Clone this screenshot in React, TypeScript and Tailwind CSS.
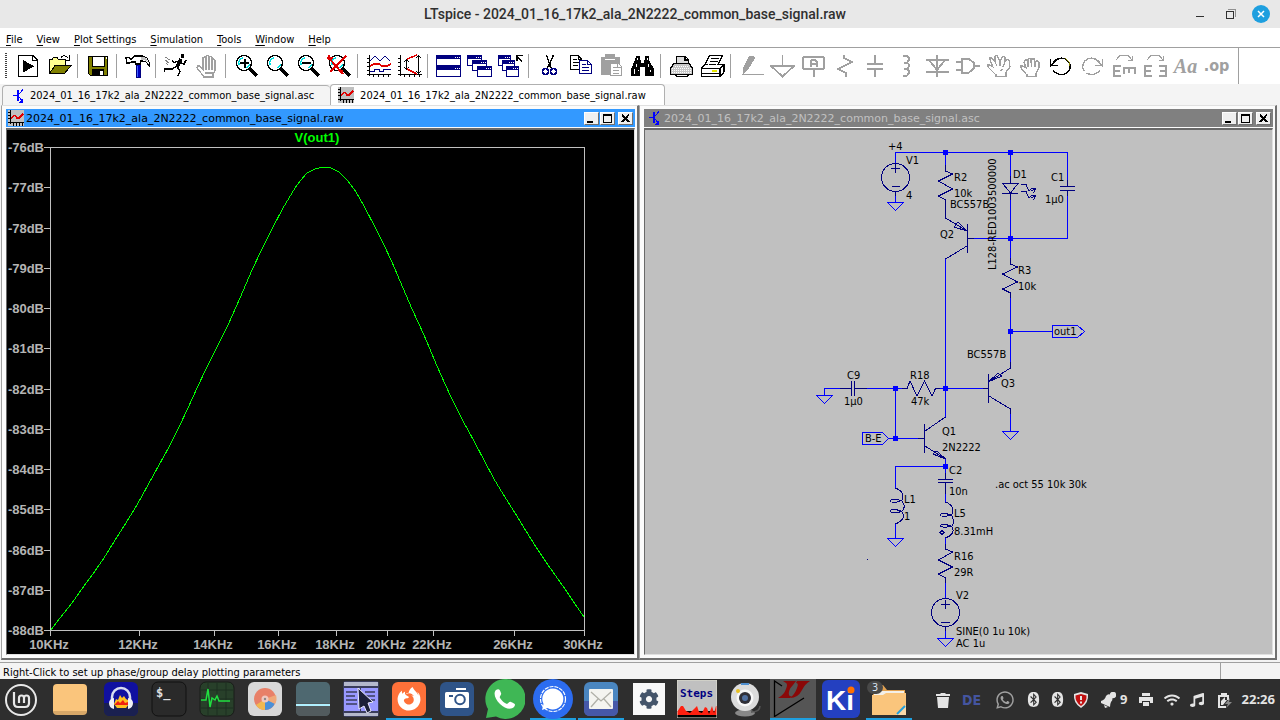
import React from 'react';
import { FaWhatsapp, FaBluetooth, FaFirefoxBrowser, FaWifi, FaMusic, FaCog } from 'react-icons/fa';

const FILE = '2024_01_16_17k2_ala_2N2222_common_base_signal';

// --- TOOLBAR ICONS (25x24, hard pixel edges) ---
const Tool: React.FC<{ children: React.ReactNode; color?: string }> = ({ children, color = '#000' }) => (
  <svg className="h-6 w-[25px]" viewBox="0 0 25 24" fill="none" stroke={color} strokeWidth="1.4" shapeRendering="crispEdges">
    {children}
  </svg>
);

const GRAY = '#a0a0a0';
const NAVY = '#000080';

const RunIcon = () => (
  <Tool>
    <path d="M2.5 1.5H17l4.500 4.500V22.500H2.500Z" />
    <path d="M16.500 1.500V6.500H21.500" />
    <path d="M7 6V18.500L18 12.300Z" fill="#000" stroke="none" />
  </Tool>
);

const OpenIcon = () => (
  <Tool>
    <path d="M2.500 19V5.500H5L6.500 3.500H10L11.500 5.500H18.500V11" fill="#ffff90" strokeWidth="1" />
    <path d="M2.500 19.500L8 11.500H24L17.500 19.500Z" fill="#808000" strokeWidth="1" />
    <path d="M14 3.500C16 1 19 1 21.500 4.500M22.500 1V6H17.500" strokeWidth="1" />
  </Tool>
);

const SaveIcon = () => (
  <Tool>
    <path d="M2.500 2.500H21.500V21.500H4.500L2.500 19.500Z" fill="#808000" />
    <path d="M6 2.500H18V12H6Z" fill="#fff" strokeWidth="1" />
    <path d="M6 15H18V22H6Z" fill="#000" stroke="none" />
    <path d="M14 17H17V21H14Z" fill="#fff" stroke="none" />
    <path d="M20 4H21" stroke="#fff" />
  </Tool>
);

const HammerIcon = () => (
  <Tool>
    <path d="M11 10H15V23H11Z" fill="#0000c0" stroke="#000080" strokeWidth="1" />
    <path d="M1 3.500H4L5 5H7L9 2H18L22 4L24.500 9V12L21 8L18 7H15.500V10H10.500V8H6L5 9H1.500Z" fill="#fff" strokeWidth="1.200" />
    <path d="M16 3H19L22 5L23 8L19 6H16Z" fill="#c0c0c0" stroke="none" />
    <path d="M12 12V23" stroke="#4060ff" strokeWidth="1" />
  </Tool>
);

const RunnerIcon = () => (
  <Tool>
    <path d="M17 0H20V4H17Z" fill="#000" stroke="none" />
    <path d="M17 5L13 13" strokeWidth="3.500" />
    <path d="M15 7L10 8.500L8 6M17 9L20 10L22 6M13 12L8 15H1L0.500 18M13 13L16 17L14 22" strokeWidth="1.400" />
    <path d="M1 3L6 6M1 6L5 9M2 9L4 11" stroke="#808080" strokeWidth="1" />
  </Tool>
);

const HaltIcon = () => (
  <Tool color={GRAY}>
    <path d="M8 21.500L2 14L3 12H5L8 15V4L9.500 3L11 4V11V2.500L12.500 1.500L14 2.500V11V3.500L15.500 2.500L17 3.500V11V6L18.500 5L20 6V17L18 20V23H9Z" />
    <path d="M11 11V16M14 11V16M17 11V16M10 19H18" />
  </Tool>
);

const Lens: React.FC<{ children?: React.ReactNode }> = ({ children }) => (
  <Tool>
    <circle cx="10" cy="9" r="7.500" strokeWidth="1.400" fill="#fff" />
    <path d="M5 11C4 7 6 4 9 4M13 14L16 10" stroke="#00e0e0" strokeWidth="1.400" />
    <path d="M16 15L23 22" strokeWidth="3.200" />
    {children}
  </Tool>
);

const PlotIcon: React.FC<{ children: React.ReactNode }> = ({ children }) => (
  <Tool>
    <path d="M3.500 1V21.500M1 20.500H25M1 4.500H3M1 8.500H3M1 12.500H3M1 16.500H3M7.500 21V23M12.500 21V23M17.500 21V23M22.500 21V23" strokeWidth="1" />
    {children}
  </Tool>
);

const Win: React.FC<{ x: number; y: number; w: number; h: number }> = ({ x, y, w, h }) => (
  <g stroke="none">
    <path d={`M${x} ${y}h${w}v${h}h${-w}z`} fill={NAVY} />
    <path d={`M${x + 1} ${y + 4}h${w - 2}v${h - 5}h${-(w - 2)}z`} fill="#fff" />
    <path d={`M${x + w - 6} ${y + 1.5}h1v1h-1zm2 0h1v1h-1zm2 0h1v1h-1z`} fill="#fff" />
  </g>
);

const CutIcon = () => (
  <Tool>
    <path d="M9.500 1L14 14M16.500 1L10.500 14M13 9V13" strokeWidth="1.400" />
    <circle cx="8.500" cy="17.500" r="2.800" stroke={NAVY} strokeWidth="1.500" />
    <circle cx="16.500" cy="17.500" r="2.800" stroke={NAVY} strokeWidth="1.500" />
  </Tool>
);

const CopyIcon = () => (
  <Tool>
    <path d="M2.500 1.500H10L13.500 5V15.500H2.500Z" fill="#fff" strokeWidth="1" />
    <path d="M5 5.500H9M5 8.500H11M5 11.500H10M10 1.500V5H13" strokeWidth="1" />
    <path d="M11.500 6.500H19.500L23.500 10.500V19.500H11.500Z" fill="#fff" stroke={NAVY} strokeWidth="1" />
    <path d="M14 10.500H18M14 13.500H21M14 16.500H21M19.500 6.500V10.500H23" stroke={NAVY} strokeWidth="1" />
  </Tool>
);

const PasteIcon = () => (
  <Tool color={GRAY}>
    <path d="M2 3H20V10H11V20H2Z" fill={GRAY} strokeWidth="1" />
    <path d="M7 1H15V5H7Z" fill={GRAY} />
    <path d="M6 5.500H16" stroke="#fff" strokeWidth="1" />
    <path d="M11.500 9.500H19.500L22.500 12.500V21.500H11.500Z" fill="#fff" />
    <path d="M14 13.500H18M14 16.500H20M14 19H20M18.500 9.500V13H22" strokeWidth="1" />
  </Tool>
);

const FindIcon = () => (
  <Tool>
    <path d="M6 2H10V6H11V9H14V6H15V2H19V6L24 15V22H15V13H10V22H1V15L5 6Z" fill="#000" stroke="none" />
    <path d="M7 4V6M17 4V6M6 10V13M4 15V20M18 10V13M20 16V18M8 16V17" stroke="#fff" strokeWidth="1" />
  </Tool>
);

const PrintSetupIcon = () => (
  <Tool>
    <path d="M7.500 9V2.500H16L19.500 6V9.500" fill="#ddd" />
    <path d="M5 9.500H20L23.500 14V20.500H1.500V14Z" fill="#c8c8c8" />
    <path d="M6 20.500H20L18.500 22.500H7.500ZM16 2.500V6H19" fill="#fff" />
    <path d="M3 14H22M3 16H22M3 18H22M6 12H20" stroke="#fff" strokeWidth="1" strokeDasharray="1 1" />
  </Tool>
);

const PrintIcon = () => (
  <Tool>
    <path d="M5 11L9.500 1.500H22.500L18 11" fill="#fff" />
    <path d="M11 4.500H19M10 7.500H18M9 10H16" strokeWidth="1" />
    <path d="M1.500 14.500L5 10.500H8M19 10.500H24V18L20 22.500H1.500V14.500H20V22M20 14.500L24 10.500" fill="#fff" />
    <path d="M2 19.500H20" strokeWidth="1" />
    <path d="M12 17H17" stroke="#e8e800" strokeWidth="2" />
  </Tool>
);

const PencilIcon = () => (
  <Tool color={GRAY}>
    <path d="M10 1.500H14L16 4L9 16L4 20V14Z" fill={GRAY} stroke="none" />
    <path d="M3 20.500H25" strokeWidth="1" />
  </Tool>
);

const GroundIcon = () => (
  <Tool color={GRAY}>
    <path d="M12.500 1V12M1 12H24L12.500 22.500Z" strokeWidth="1.800" />
  </Tool>
);

const LabelIcon = () => (
  <Tool color={GRAY}>
    <rect x="2" y="3" width="21" height="12" rx="2" strokeWidth="2" />
    <path d="M12.500 16V23M9.500 13V7.500L11 5.500H14L15.500 7.500V13M9.500 10H15.500" strokeWidth="2" />
  </Tool>
);

const ResistorIcon = () => (
  <Tool color={GRAY}>
    <path d="M12 1V4L20 8L6 15L14 19V23" strokeWidth="2" />
  </Tool>
);

const CapacitorIcon = () => (
  <Tool color={GRAY}>
    <path d="M12 1V9M12 16V23M4 10H20M4 15H20" strokeWidth="2" />
  </Tool>
);

const InductorIcon = () => (
  <Tool color={GRAY}>
    <path d="M9 2H13L15 4V6L13 8.500H10H13L15 10.500V12.500L13 15H10H13L15 17V19L13 21.500H9" strokeWidth="2" />
  </Tool>
);

const DiodeIcon = () => (
  <Tool color={GRAY}>
    <path d="M12 1V23M1 6H24M4 6L12 16L20 6M1 18H24" strokeWidth="2" />
  </Tool>
);

const GateIcon = () => (
  <Tool color={GRAY}>
    <path d="M6 5H13L18 9V14L13 18.500H6ZM0 8H6M0 15.500H6M18 12H24" strokeWidth="2" />
  </Tool>
);

const MoveIcon = () => (
  <Tool color={GRAY}>
    <path d="M8 20L1 13V11H3L6 13L3 6V4H5L8 8V2L10 1L13 8L16 2L18 3V8L20 5L22 6L23 13L19 18V22.500H9V20M8 8L10 12M13 8V12M18 8L16 13M16 15L13 17" strokeWidth="1.300" />
  </Tool>
);

const DragIcon = () => (
  <Tool color={GRAY}>
    <path d="M8 20L3 14V12H5L8 14L6 8L7 6H9L10 9V5L12 4L13 5V9L14 5H16L17 9L18 7H20L21 8V14L18 19V22.500H9V20M10 9V13M13.500 9V13M17 9V13" strokeWidth="1.300" />
  </Tool>
);

const UndoIcon: React.FC<{ color?: string; flip?: boolean }> = ({ color = '#000', flip }) => (
  <Tool color={color}>
    <g transform={flip ? 'matrix(-1 0 0 1 24 0)' : undefined}>
      <path d="M3 11C6 4 14 2 19 7C24 13 20 20 13 20.500C9 20.500 6 19 4 16" strokeWidth="1.400" strokeDasharray={flip ? '30 3' : undefined} />
      {!flip && <path d="M16 4.500C19 6 21 9 21 12" stroke="#808000" strokeWidth="1" />}
      <path d="M1.500 5V12.500M1.500 11.500H9M2 11L8 6" strokeWidth="1.600" />
    </g>
  </Tool>
);

const FlipIcon: React.FC<{ rotate?: boolean }> = ({ rotate }) => (
  <Tool color={GRAY}>
    <path d="M5 6L9 1.500H17L21 6M21.500 2V6.500H17" strokeWidth="1.200" />
    <path d="M10 12H3V22H10M3 17H9" strokeWidth="2.600" />
    {rotate ? (
      <path d="M12 14H25M13 14V20M18 14V19M24 14V20" strokeWidth="2.400" />
    ) : (
      <path d="M17 12H24V22H17M18 17H23" strokeWidth="2.600" />
    )}
  </Tool>
);

const TextGlyph: React.FC<{ children: string; className: string }> = ({ children, className }) => (
  <span className={`text-[#a0a0a0] font-bold leading-6 ${className}`}>{children}</span>
);

type ToolDef = [string, React.ReactNode] | null;

const TOOLS: ToolDef[] = [
  ['Run', <RunIcon />],
  ['Open', <OpenIcon />],
  null,
  ['Save', <SaveIcon />],
  null,
  ['Control Panel', <HammerIcon />],
  null,
  ['Simulate', <RunnerIcon />],
  ['Halt', <HaltIcon />],
  null,
  ['Zoom in', <Lens><path d="M6 9H15M10.500 4.500V13.500" strokeWidth="2" /></Lens>],
  ['Pan', <Lens />],
  ['Zoom out', <Lens><path d="M6 9H15" strokeWidth="2" /></Lens>],
  ['Zoom to fit', <Lens><path d="M1 3L16 20M19 2L3 18M2 1V6M0 4H6M16 17L11 16" stroke="#e00000" strokeWidth="2" /></Lens>],
  null,
  ['Autorange', (
    <PlotIcon>
      <path d="M4 7L9 2L14 7L19 2L24 7" stroke={NAVY} strokeWidth="1" />
      <path d="M4 12L8 10H13L16 12H21L25 10" stroke="#e00000" strokeWidth="1.500" />
      <path d="M4 17.500H8V15.500H13V17.500H17V15.500H25" stroke={NAVY} strokeWidth="1" />
    </PlotIcon>
  )],
  ['Axes', (
    <PlotIcon>
      <path d="M9.500 6V15M21.500 2V19M7 8L9.500 6L12 8M7 13L9.500 15L12 13M19 4L21.500 2L24 4M19 17L21.500 19L24 17" strokeWidth="1" />
      <path d="M10 5L20 1M10 15L20 20" stroke="#e00000" strokeWidth="1.400" />
    </PlotIcon>
  )],
  null,
  ['Tile', <Tool><Win x={0} y={1} w={25} h={11} /><Win x={0} y={12} w={25} h={11} /></Tool>],
  ['Cascade', <Tool><Win x={0} y={1} w={15} h={11} /><Win x={5} y={6} w={15} h={11} /><Win x={10} y={12} w={15} h={11} /></Tool>],
  ['Close all', <Tool><Win x={0} y={1} w={13} h={11} /><Win x={4} y={6} w={13} h={11} /><Win x={8} y={12} w={13} h={11} /><path d="M19 7V1.500H25M19 2L24 8" /></Tool>],
  null,
  ['Cut', <CutIcon />],
  ['Copy', <CopyIcon />],
  ['Paste', <PasteIcon />],
  ['Find', <FindIcon />],
  null,
  ['Print Setup', <PrintSetupIcon />],
  ['Print', <PrintIcon />],
  null,
  ['Wire', <PencilIcon />],
  ['Ground', <GroundIcon />],
  ['Label Net', <LabelIcon />],
  ['Resistor', <ResistorIcon />],
  ['Capacitor', <CapacitorIcon />],
  ['Inductor', <InductorIcon />],
  ['Diode', <DiodeIcon />],
  ['Component', <GateIcon />],
  ['Move', <MoveIcon />],
  ['Drag', <DragIcon />],
  ['Undo', <UndoIcon />],
  ['Redo', <UndoIcon color={GRAY} flip />],
  ['Rotate', <FlipIcon rotate />],
  ['Mirror', <FlipIcon />],
  ['Text', <TextGlyph className="font-['Liberation_Serif',serif] text-xl italic">Aa</TextGlyph>],
  ['SPICE Directive', <TextGlyph className="font-['DejaVu_Sans_Condensed',sans-serif] text-base leading-5">.op</TextGlyph>],
];

const MENUS = ['File', 'View', 'Plot Settings', 'Simulation', 'Tools', 'Window', 'Help'];

// --- DOCUMENT ICONS ---
const SchematicIcon = () => (
  <svg className="h-4 w-4 shrink-0" viewBox="0 0 16 16" fill="none" stroke="#0000ff" shapeRendering="crispEdges">
    <path d="M3 7.500H7" />
    <path d="M8 2V13" strokeWidth="2" />
    <path d="M9 6L13 1.500M9 9L13 14" />
    <path d="M12.500 11V14.500H9.500Z" fill="#0000ff" stroke="none" />
  </svg>
);

const WaveIcon = () => (
  <svg className="h-4 w-4 shrink-0" viewBox="0 0 16 16" fill="none" stroke="#000" shapeRendering="crispEdges">
    <path d="M0 0H16V16H0Z" fill="#c0c0c0" stroke="none" />
    <path d="M2.500 0V14M0 12.500H16M0 2.500H2M0 5.500H2M0 8.500H2M5.500 13V16M8.500 13V16M11.500 13V16M14.500 13V16" />
    <path d="M3 8L6 5.500H7L9 8H11L15 4" stroke="#e00000" strokeWidth="1.600" />
  </svg>
);

const WinButton: React.FC<{ label: string; children: React.ReactNode }> = ({ label, children }) => (
  <button aria-label={label} className="flex h-[13px] w-[15px] items-center justify-center border border-t-white border-l-white border-r-[#707070] border-b-[#707070] bg-[#f0f0f0]">
    <svg className="h-[11px] w-[13px]" viewBox="0 0 13 11" fill="none" stroke="#000" shapeRendering="crispEdges">
      {children}
    </svg>
  </button>
);

const Pane: React.FC<{ title: string; icon: React.ReactNode; active?: boolean; children: React.ReactNode }> = ({ title, icon, active, children }) => (
  <section className="flex min-w-0 flex-1 flex-col border-l border-t border-r-2 border-b-2 border-t-[#e0e0e0] border-l-[#a0a0a0] border-r-[#707070] border-b-[#707070] bg-[#fbfbfb] pt-[3px] pr-[2px] pb-[3px] pl-1">
    <header className={`flex h-[18px] shrink-0 items-center font-['DejaVu_Sans',sans-serif] text-[11px] ${active ? 'bg-[#3399ff] text-black' : 'bg-[#808080] text-[#c0c0c0]'}`}>
      <span className="mr-[2px] ml-[2px]">{icon}</span>
      <h2 className="flex-1 truncate pt-[2px]">{title}</h2>
      <div className="flex gap-px pr-[2px]">
        <WinButton label="Minimize"><path d="M2 9H8" strokeWidth="2" /></WinButton>
        <WinButton label="Maximize"><path d="M2.500 1V9.500H10.500V1M2 1.500H11M2 2.500H11" /></WinButton>
        <span className="w-px" />
        <WinButton label="Close"><path d="M3 1.500L10 9M10 1.500L3 9" strokeWidth="2" /></WinButton>
      </div>
    </header>
    <div className="mt-px min-h-0 flex-1 border border-t-2 border-t-[#696969] border-l-[#696969] border-r-[#e0e0e0] border-b-[#e0e0e0]">
      {children}
    </div>
  </section>
);

// --- PLOT ---
const LEFT = 50;
const RIGHT = 584;
const TOP = 147;
const BOTTOM = 630;

const CURVE: [number, number][] = [
  [51, 630], [60, 618], [72, 603], [84, 586], [95, 571], [104, 558], [112, 545], [124, 526], [137, 505],
  [148, 485], [159, 465], [169, 447], [179, 427], [188, 408], [197, 388], [206, 369], [219, 343], [228, 325],
  [240, 298], [252, 270], [262, 249], [272, 229], [283, 208], [295, 188], [301, 180], [307, 173], [315, 169], [323, 167],
  [331, 168], [339, 172], [348, 181], [356, 192], [364, 206], [375, 227], [384, 245], [392, 262], [400, 281],
  [412, 309], [424, 335], [437, 366], [450, 395], [463, 421], [474, 441], [485, 462], [494, 479], [503, 494],
  [515, 513], [526, 531], [536, 547], [548, 565], [565, 589], [575, 604], [584, 617],
];

const freqX = (khz: number) => Math.round(LEFT + (Math.log(khz / 10) / Math.log(3)) * (RIGHT - LEFT));

const Plot = () => (
  <svg className="block h-full w-full bg-black font-['Liberation_Sans',sans-serif] text-[13px] font-bold" viewBox="7 130 627 524" fill="none">
    <g stroke="#c0c0c0" shapeRendering="crispEdges">
      <path d={`M${LEFT + 0.5} ${TOP + 0.5}H${RIGHT + 0.5}V${BOTTOM + 0.5}H${LEFT + 0.5}Z`} />
      {Array.from({ length: 13 }, (_, i) => (
        <path key={i} d={`M44 ${Math.round(TOP + i * 40.25) + 0.5}H${LEFT}`} />
      ))}
      {[10, 12, 14, 16, 18, 20, 22, 26, 30].map((f) => (
        <path key={f} d={`M${freqX(f) + 0.5} ${BOTTOM}V${BOTTOM + 6}`} />
      ))}
    </g>
    <g fill="#b4b4b4">
      {Array.from({ length: 13 }, (_, i) => (
        <text key={i} x="44" y={Math.round(TOP + i * 40.25) + 5} textAnchor="end">{`-${76 + i}dB`}</text>
      ))}
      {[10, 12, 14, 16, 18, 20, 22, 26, 30].map((f) => (
        <text key={f} x={freqX(f) - 1} y="649" textAnchor="middle">{`${f}KHz`}</text>
      ))}
    </g>
    <text x="317" y="142" textAnchor="middle" fill="#00ff00">V(out1)</text>
    <polyline points={CURVE.map((p) => p.join(',')).join(' ')} stroke="#00ff00" shapeRendering="crispEdges" />
  </svg>
);

// --- SCHEMATIC ---
const WIRES = [
  'M895.500 163V152.500H1067.500V180', 'M895.500 196V202', 'M1067.500 196V238.500H974', 'M945.500 152V165', 'M1010.500 152V176',
  'M1010.500 200V258', 'M945.500 259V417', 'M1010.500 298V362', 'M1010.500 331.500H1052', 'M824.500 395V388.500H840',
  'M867 388.500H902', 'M895.500 388V438', 'M889 438.500H918', 'M940 388.500H983', 'M1010.500 414V431', 'M945.500 459V473',
  'M945.500 466.500H895.500V488', 'M895.500 524V538', 'M945.500 494V502', 'M945.500 538V544', 'M945.500 583V598', 'M945.500 631V638',
  'M887.500 202.500H903.500L895.500 210.500Z', 'M816.500 395.500H832.500L824.500 403.500Z', 'M1002.500 431.500H1018.500L1010.500 439.500Z',
  'M887.500 538.500H903.500L895.500 546.500Z', 'M937.500 638.500H953.500L945.500 646.500Z',
  'M1052.500 325.500H1077.500L1084.500 331.500L1077.500 337.500H1052.500Z', 'M862.500 432.500H882.500L888.500 438.500L882.500 444.500H862.500Z',
];

const PARTS = [
  // V1, V2
  'M909.500 177.500A14 14 0 1 1 881.500 177.500A14 14 0 1 1 909.500 177.500M891 168.500H900M895.500 164V173M892 186.500H900M895.500 191V196',
  'M959.500 612.500A14 14 0 1 1 931.500 612.500A14 14 0 1 1 959.500 612.500M941 604.500H950M945.500 600V609M941 622.500H950M945.500 626V631',
  // R2, R3, R16, R18
  'M945.500 165V171L952.500 174L938.500 181L952.500 189L938.500 196L945.500 200V218',
  'M1010.500 258V264L1017.500 267L1002.500 274L1017.500 282L1002.500 289L1010.500 293V298',
  'M945.500 544V549L952.500 552L938.500 560L952.500 567L938.500 574L945.500 578V583',
  'M902 388.500H907L910 381L917 396L924.500 381L932 396L935.500 388.500H941',
  // D1
  'M1010.500 176V183M1002.500 183.500H1018L1010.500 193ZM1002 193.500H1018M1010.500 193V200',
  'M1021 184.500H1026L1029 191L1032 188H1036M1031 191L1035.500 188.500L1033.500 193M1021 191.500H1026L1029 198L1032 195H1036M1031 198L1035.500 195.500L1033.500 200',
  // C1, C2, C9
  'M1067.500 180V186M1060 186.500H1075M1060 190.500H1075M1067.500 190V196',
  'M945.500 473V479M938 479.500H953M938 482.500H953M945.500 482V494',
  'M839 388.500H851M851.500 381V396M854.500 381V396M855 388.500H867',
  // Q2, Q3, Q1
  'M945.500 218L967 231M967.500 224V253M967 246L945.500 259M968 238.500H975M958 222L954 227L967 231Z',
  'M1010.500 362V368L989 381.500M988.500 374V403M989 396L1010.500 409V414M981 388.500H988M989 381.500L998 373L1002 376Z',
  'M945.500 417L925 431M924.500 424V453M925 446L945.500 459M917 438.500H924M933 454L937 451L945.500 459Z',
  // L1, L5
  'M895.500 488C901 490 904 494 902 500C897 504 890 502 890 501C890 499 899 499 902 501C906 506 904 509 902 511C897 514 890 512 890 511C890 509 899 509 902 512C906 517 901 522 895.500 524',
  'M945.500 502C951 504 954 508 952 514C947 518 940 516 940 515C940 513 949 513 952 516C954 520 954 523 952 526C947 528 940 527 940 526C940 524 949 524 952 527C955 532 951 536 945.500 538',
  'M940 532.500L942 530.500L944 532.500L942 534.500Z',
];

const NODES: [number, number][] = [[945, 152], [1010, 152], [1010, 238], [1010, 331], [895, 388], [945, 388], [895, 438], [945, 466]];

const LABELS: [number, number, string][] = [
  [888, 150, '+4'], [906, 164, 'V1'], [906, 199, '4'], [954, 181, 'R2'], [954, 197, '10k'], [950, 208, 'BC557B'], [940, 238, 'Q2'],
  [1013, 178, 'D1'], [1051, 181, 'C1'], [1045, 203, '1µ0'], [1018, 274, 'R3'], [1018, 290, '10k'], [1054, 335, 'out1'],
  [967, 358, 'BC557B'], [1001, 387, 'Q3'], [847, 379, 'C9'], [844, 405, '1µ0'], [910, 379, 'R18'], [911, 405, '47k'],
  [865, 442, 'B-E'], [942, 435, 'Q1'], [942, 451, '2N2222'], [949, 474, 'C2'], [949, 495, '10n'], [904, 503, 'L1'], [904, 520, '1'],
  [954, 517, 'L5'], [954, 535, '8.31mH'], [954, 560, 'R16'], [954, 576, '29R'], [956, 599, 'V2'], [956, 635, 'SINE(0 1u 10k)'],
  [956, 647, 'AC 1u'], [995, 488, '.ac oct 55 10k 30k'],
];

const Schematic = () => (
  <svg className="block h-full w-full bg-[#c0c0c0] font-['DejaVu_Sans_Condensed','DejaVu_Sans',sans-serif] text-[11px]" viewBox="645 130 627 524" fill="none">
    <g shapeRendering="crispEdges">
      <path d={PARTS.join('')} stroke={NAVY} />
      <path d={WIRES.join('')} stroke="#0000ff" />
      {NODES.map(([x, y]) => (
        <rect key={`${x}-${y}`} x={x - 2} y={y - 2} width="5" height="5" fill="#0000ff" />
      ))}
      <rect x="867" y="559" width="1" height="1" fill={NAVY} />
    </g>
    <g fill="#000">
      {LABELS.map(([x, y, label]) => (
        <text key={`${x}-${y}`} x={x} y={y}>{label}</text>
      ))}
      <text transform="translate(996 270) rotate(-90)">L128-RED1003500000</text>
    </g>
  </svg>
);

// --- DOCK ICONS (36x36) ---
const Dock: React.FC<{ children: React.ReactNode }> = ({ children }) => (
  <svg className="h-9 w-9" viewBox="0 0 36 36" fill="none">
    {children}
  </svg>
);

const MintIcon = () => (
  <Dock>
    <circle cx="18" cy="18" r="15" stroke="#e8e8e8" strokeWidth="2" />
    <path d="M11 10V21Q11 25 15 25H22Q26 25 26 21V16Q26 13.500 23.500 13.500Q21 13.500 21 16V21M21 16Q21 13.500 18.500 13.500Q16 13.500 16 16V21" stroke="#e8e8e8" strokeWidth="2.200" />
  </Dock>
);

const AudacityIcon = () => (
  <Dock>
    <rect x="1" y="1" width="34" height="34" rx="6" fill="#1010a0" />
    <path d="M1 22H35V29Q35 35 29 35H7Q1 35 1 29Z" fill="#1a2050" />
    <path d="M11 23L13 18L15 19L17 14L19 17L21 15L23 18L25 19L26 23L23 27H14Z" fill="#ffc020" />
    <path d="M12 23L15 20L17 22L20 19L22 22L25 21V24H12Z" fill="#f02010" />
    <path d="M9 20V16A9 9 0 0 1 27 16V20" stroke="#d8dcf0" strokeWidth="2.500" />
    <path d="M11 17V28Q6 27 6 22Q6 18 11 17ZM25 17V28Q30 27 30 22Q30 18 25 17Z" fill="#f0f0f8" />
  </Dock>
);

const TerminalIcon = () => (
  <Dock>
    <rect x="1" y="1" width="34" height="34" rx="6" fill="#2a2a2a" stroke="#111" />
    <text x="5" y="16" fill="#e0e0e0" className="font-['DejaVu_Sans_Mono',monospace] text-xs font-bold">$_</text>
  </Dock>
);

const MonitorIcon = () => (
  <Dock>
    <rect x="1" y="1" width="34" height="34" rx="6" fill="#28402a" stroke="#181c18" />
    <path d="M2 9H34M2 18H34M2 27H34M9 2V34M18 2V34M27 2V34" stroke="#1d2f20" />
    <path d="M2 19H7L9 8L11 26L13 17L16 19L18 15L20 20H31" stroke="#20e040" strokeWidth="1.500" />
  </Dock>
);

const DiscIcon = () => (
  <Dock>
    <rect x="1" y="1" width="34" height="34" rx="6" fill="#d8d8d8" />
    <circle cx="18" cy="18" r="11" fill="#e88068" />
    <path d="M18 18L28 22A11 11 0 0 1 18 29Z" fill="#4a90d8" />
    <path d="M18 18V29A11 11 0 0 1 9 24Z" fill="#f0b850" />
    <path d="M18 18L29 14A11 11 0 0 1 28 23Z" fill="#f0a878" />
    <circle cx="18" cy="18" r="3.500" fill="#f0c8c0" />
    <circle cx="18" cy="18" r="1.200" fill="#888" />
  </Dock>
);

const ScannerIcon = () => (
  <Dock>
    <rect x="1" y="1" width="34" height="34" rx="5" fill="#4e6870" />
    <path d="M1 22H35V30Q35 35 30 35H6Q1 35 1 30Z" fill="#525b5e" />
    <path d="M1 24H35" stroke="#b0f0ff" strokeWidth="2" />
  </Dock>
);

const PointerIcon = () => (
  <Dock>
    <rect x="0" y="0" width="36" height="36" rx="3" fill="#3a3d5c" />
    <path d="M1 1H35V5H1ZM1 32H35V35H1Z" fill="#b4b8cc" />
    <path d="M1 7H17V30H1ZM18 7H35V30H18Z" fill="#9898ff" />
    <path d="M3 11H14M3 15H12M3 19H14M3 23H14M22 11H32M22 15H32M26 19H32" stroke="#3a3d5c" strokeWidth="1.500" />
    <path d="M15 7L30 21L25 22L28 30L24 32L21 25L16 28Z" fill="#1c2038" stroke="#e8e8f8" strokeWidth="1" />
  </Dock>
);

const FirefoxIcon = () => (
  <Dock>
    <rect x="1" y="1" width="34" height="34" rx="6" fill="#ff7139" />
    <FaFirefoxBrowser x="6" y="6" size={24} color="#fff" />
  </Dock>
);

const CameraIcon = () => (
  <Dock>
    <rect x="1" y="1" width="34" height="34" rx="6" fill="#2f5488" />
    <path d="M17 7H27V9H17Z" fill="#fff" />
    <rect x="6" y="11" width="24" height="16" rx="1.500" fill="#fff" />
    <circle cx="21" cy="18.500" r="4.800" stroke="#2f5488" strokeWidth="2" />
    <path d="M10 15H14" stroke="#2f5488" strokeWidth="2" />
  </Dock>
);

const WhatsAppIcon = () => (
  <svg className="h-10 w-10" viewBox="0 0 40 40" fill="none">
    <path d="M20 0A20 20 0 1 1 11 37.500L1 39L3 30A20 20 0 0 1 20 0Z" fill="#3fb755" />
    <path d="M11 11C14 9 15 11 16 14C17 16 14 17 15 19C17 22 19 24 22 25C23 25 24 22 26 23C30 25 31 25 29 28C26 31 20 30 15 25C10 20 8 14 11 11Z" fill="#fff" />
  </svg>
);

const SignalIcon = () => (
  <svg className="h-10 w-10" viewBox="0 0 40 40" fill="none">
    <circle cx="20" cy="20" r="20" fill="#2c6cf0" />
    <circle cx="20" cy="20" r="12.500" stroke="#fff" strokeWidth="1.200" strokeDasharray="4 1" />
    <path d="M20 9.500A10.500 10.500 0 1 1 14.500 29L9 31L10.500 25A10.500 10.500 0 0 1 20 9.500Z" fill="#fff" />
  </svg>
);

const MailIcon = () => (
  <Dock>
    <rect x="1" y="1" width="34" height="34" rx="6" fill="#4a86c0" />
    <path d="M1 20H35V29Q35 35 29 35H7Q1 35 1 29Z" fill="#4658a8" />
    <rect x="6" y="8" width="24" height="20" rx="1" fill="#f4f4f0" />
    <path d="M8 11L18 20L28 11M8 26L15 18M28 26L21 18" stroke="#b0b0a8" strokeWidth="1.300" />
  </Dock>
);

const StepsIcon = () => (
  <svg className="h-[38px] w-10" viewBox="0 0 40 38" fill="none">
    <rect width="40" height="38" fill="#c0c0c0" />
    <rect y="31" width="40" height="7" fill="#000" />
    <path d="M0 32L4 26H6L9 31L13 33L17 29L20 26L22 32L25 33L28 27L30 28L32 34L35 26L37 33L39 26H40V35H0Z" fill="#ff2010" />
    <path d="M0 0H40V38H0Z" stroke="#e0e0d0" />
    <text x="3" y="17" fill={NAVY} className="font-['DejaVu_Sans_Mono',monospace] text-[11px] font-bold">Steps</text>
  </svg>
);

const WebcamIcon = () => (
  <Dock>
    <ellipse cx="18" cy="32" rx="10" ry="3.500" fill="#888" />
    <path d="M24 31Q33 31 33 25" stroke="#555" strokeWidth="1.500" />
    <circle cx="18" cy="16" r="14" fill="#dcdcdc" />
    <circle cx="18" cy="17" r="8.500" fill="#f8f8f8" />
    <circle cx="18" cy="17" r="6" fill="#303038" />
    <circle cx="18" cy="17" r="3" fill="#5070a0" />
    <circle cx="11" cy="10" r="2" fill="#e8c020" />
    <path d="M14 2H22V4H14Z" fill="#5090d0" />
  </Dock>
);

const SpiceIcon = () => (
  <svg className="h-[37px] w-[46px]" viewBox="0 0 46 37" fill="none">
    <path d="M12 6L4.500 1V36.500L34 18" stroke="#000" strokeWidth="1.300" />
    <path d="M13 1H26L23 5Q18 10 19 15Q20 17 22 16L20 18H8Q14 15 16 9Q18 4 16 3Z" fill="#8a0808" />
    <path d="M27 1H40Q35 4 32 10Q28 18 20 18Q25 14 27 8Q29 3 26 3Z" fill="#8a0808" />
  </svg>
);

const KicadIcon = () => (
  <svg className="h-[38px] w-[38px]" viewBox="0 0 38 38" fill="none">
    <rect width="38" height="38" rx="6" fill="#2440c0" />
    <text x="4" y="30" fill="#fff" className="font-['Liberation_Sans',sans-serif] text-[28px] font-bold">Ki</text>
    <circle cx="29" cy="10" r="3.500" fill="#ff7000" />
  </svg>
);

const FolderIcon = () => (
  <div className="relative">
    <Dock>
      <path d="M2 4H12L16 9H34V34H2Z" fill="#e0a050" />
      <path d="M3 10H33V14H3Z" fill="#f4f0e8" />
      <path d="M1 14H12L15 12H35V34H1Z" fill="#fac57c" />
      <path d="M25 34L35 24V34Z" fill="#fad8a8" />
      <path d="M26 33L34 25" stroke="#1e9fdf" strokeWidth="2" />
    </Dock>
    <span className="absolute top-0 -left-1 flex h-[13px] w-4 items-center justify-center rounded-full bg-[#484848] text-[10px] text-[#e0f0ff]">3</span>
  </div>
);

const DOCK: { name: string; icon: React.ReactNode; running?: boolean; focused?: boolean }[] = [
  { name: 'Audacity', icon: <AudacityIcon /> },
  { name: 'Terminal', icon: <TerminalIcon /> },
  { name: 'System Monitor', icon: <MonitorIcon /> },
  { name: 'Disk Usage', icon: <DiscIcon /> },
  { name: 'Scanner', icon: <ScannerIcon /> },
  { name: 'Pointer', icon: <PointerIcon /> },
  { name: 'Firefox', icon: <FirefoxIcon />, running: true },
  { name: 'Screenshot', icon: <CameraIcon /> },
  { name: 'WhatsApp', icon: <WhatsAppIcon /> },
  { name: 'Signal', icon: <SignalIcon />, running: true },
  { name: 'Mail', icon: <MailIcon />, running: true },
  { name: 'Settings', icon: <span className="flex h-8 w-8 items-center justify-center bg-[#f8f8f8] text-[#44546a]"><FaCog size={20} /></span> },
  { name: 'Steps', icon: <StepsIcon /> },
  { name: 'Webcam', icon: <WebcamIcon /> },
  { name: 'LTspice', icon: <SpiceIcon />, running: true, focused: true },
  { name: 'KiCad', icon: <KicadIcon /> },
  { name: 'Files', icon: <FolderIcon />, running: true },
];

const Tray: React.FC<{ children: React.ReactNode }> = ({ children }) => (
  <svg className="h-4 w-4 shrink-0" viewBox="0 0 16 16" fill="#e4e4e4">
    {children}
  </svg>
);

const App: React.FC = () => {
  return (
    <div className="flex h-screen flex-col overflow-hidden bg-[#f4f4f4] font-['DejaVu_Sans_Condensed','DejaVu_Sans',sans-serif] text-[11px] text-black">
      <header className="grid h-7 shrink-0 grid-cols-[1fr_auto_1fr] items-center bg-[#e8e8e8] pr-[10px]">
        <span />
        <h1 className="font-['Roboto',sans-serif] text-sm font-medium text-[#303030]">LTspice - {FILE}.raw</h1>
        <div className="flex items-center justify-end gap-[14px]">
          <button aria-label="Minimize window" className="h-4 w-4">
            <svg viewBox="0 0 16 16" stroke="#303030" shapeRendering="crispEdges"><path d="M4 10.500H12" /></svg>
          </button>
          <button aria-label="Restore window" className="h-4 w-4">
            <svg viewBox="0 0 16 16" fill="none" stroke="#303030" shapeRendering="crispEdges"><path d="M4.500 5.500H11.500V12.500H4.500Z" /><path d="M6 3.500H13.500V11" stroke="#909090" /></svg>
          </button>
          <button aria-label="Close window" className="h-[18px] w-[18px] rounded-full bg-[#1e9fdf]">
            <svg viewBox="0 0 18 18" stroke="#fff" strokeWidth="1.500"><path d="M6 6L12 12M12 6L6 12" /></svg>
          </button>
        </div>
      </header>

      <nav className="flex h-5 shrink-0 items-center gap-[14px] border-b border-[#a0a0a0] bg-white px-[6px] pt-1">
        {MENUS.map((menu) => (
          <button key={menu} className="leading-4">
            <span className="underline underline-offset-2">{menu[0]}</span>
            {menu.slice(1)}
          </button>
        ))}
      </nav>

      <div className="flex h-9 shrink-0 items-center bg-white">
        <span className="mr-[6px] ml-[5px] h-[26px] w-[2px] bg-[repeating-linear-gradient(#404040_0_1px,#ffffff_1px_2px)]" />
        {TOOLS.map((tool, i) =>
          tool ? (
            <button key={tool[0]} aria-label={tool[0]} className="flex h-6 w-[31px] shrink-0 items-center justify-center">
              {tool[1]}
            </button>
          ) : (
            <span key={i} className="mr-[5px] ml-[2px] h-6 w-px shrink-0 bg-[#a0a0a0]" />
          )
        )}
        <span className="ml-[6px] h-full w-px bg-[#a0a0a0]" />
      </div>

      <div className="flex h-[21px] shrink-0 items-end pl-[2px]">
        <button className="flex h-5 items-center gap-1 rounded-t-sm border-t border-l border-[#b0b0b0] bg-[#f4f4f4] pr-4 pl-[7px] whitespace-nowrap">
          <SchematicIcon />
          <span className="pt-[2px]">{FILE}.asc</span>
        </button>
        <button className="flex h-[21px] items-center gap-[6px] rounded-t-sm border border-b-0 border-[#b0b0b0] bg-white pr-[18px] pl-[7px] whitespace-nowrap">
          <WaveIcon />
          <span className="pt-[2px]">{FILE}.raw</span>
        </button>
      </div>

      <main className="flex min-h-0 flex-1 pr-[3px] pl-px">
        <Pane title={`${FILE}.raw`} icon={<WaveIcon />} active>
          <Plot />
        </Pane>
        <Pane title={`${FILE}.asc`} icon={<SchematicIcon />}>
          <Schematic />
        </Pane>
      </main>

      <footer className="mt-[2px] flex h-[17px] shrink-0 items-center border-t border-[#a0a0a0] pl-[3px]">
        <p className="flex-1 pt-[5px]">Right-Click to set up phase/group delay plotting parameters</p>
        <span className="mr-[59px] h-full w-px bg-[#a0a0a0]" />
      </footer>

      <div className="flex h-[41px] shrink-0 items-stretch bg-[#2e2e2e] font-['Open_Sans',sans-serif]">
        <button aria-label="Menu" className="flex w-[42px] items-center justify-center"><MintIcon /></button>
        <button aria-label="Show desktop" className="flex w-[55px] items-center justify-center">
          <span className="h-[31px] w-[34px] rounded-sm border-b-4 border-[#d8a868] bg-[#fac57c]" />
        </button>
        {DOCK.map((app) => (
          <button key={app.name} aria-label={app.name} className={`mx-px flex h-[41px] w-[46px] items-center justify-center border-b-2 ${app.running ? 'border-[#1e9fdf]' : 'border-transparent'} ${app.focused ? 'bg-[#555555]' : ''}`}>
            {app.icon}
          </button>
        ))}
        <div className="ml-auto flex items-center pr-[5px] text-[#e4e4e4]">
          <Tray><path d="M1 2H5L6 1H10L11 2H15V4H1ZM2 5H14L13 16H3Z" /></Tray>
          <span className="ml-[11px] font-['DejaVu_Sans_Condensed',sans-serif] text-sm font-bold text-[#4455a0]">DE</span>
          <FaWhatsapp className="ml-[14px] text-[#a0a0a0]" size={20} />
          <FaBluetooth className="ml-[11px]" size={15} />
          <FaBluetooth className="ml-[9px]" size={15} />
          <span className="ml-2">
            <Tray>
              <path d="M8 0L15 2Q16 11 8 16Q0 11 1 2Z" />
              <path d="M8 2L13.500 3.500Q14 10 8 14Q2 10 2.500 3.500Z" fill="#c01010" />
              <path d="M7 4H9V8H7ZM7 9.500H9V11.500H7Z" />
            </Tray>
          </span>
          <span className="ml-[11px]">
            <Tray>
              <path d="M1 9Q5 8 6 4Q8 1 11 3Q14 7 11 10Q10 12 10 15L1 11ZM4 13L8 15L5 16Z" />
              <circle cx="13" cy="3" r="3.200" />
            </Tray>
          </span>
          <span className="ml-[4px] text-[13px] font-bold">9</span>
          <span className="ml-[10px]"><Tray><path d="M4 1H12V4H4ZM1 5H15V11H12V9H4V11H1ZM5 10H11V14H5Z" /></Tray></span>
          <FaWifi className="ml-[10px]" size={16} />
          <FaMusic className="ml-[10px]" size={14} />
          <span className="ml-[13px]">
            <Tray>
              <path d="M1 3H4V1H10V3H12V8H10V5H3V14H9V16H1Z" />
              <path d="M4 9L8 5V8H10L6 13H4Z" />
              <path d="M13 6L8 12H11L9 16L15 10H12Z" fill="#8a8a8a" />
            </Tray>
          </span>
          <time className="ml-[9px] text-[13px] font-bold">22:26</time>
        </div>
      </div>
    </div>
  );
};

export default App;
